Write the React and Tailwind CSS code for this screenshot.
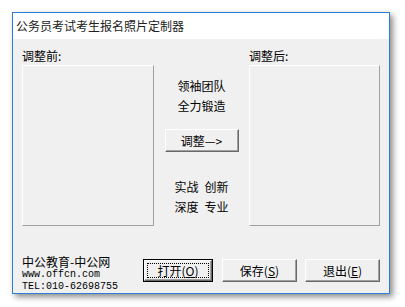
import React from 'react';

const cjk = { fontFamily: '"Noto Sans CJK SC", "Noto Sans", sans-serif' };
const mono = { fontFamily: '"Liberation Mono", "DejaVu Sans Mono", monospace' };

const WinButton = ({ children, width, focused }) => (
  <button
    type="button"
    className={
      focused
        ? 'h-[23px] border border-black bg-[#f0f0f0] p-0 flex'
        : 'h-[23px] border border-t-white border-l-white border-r-[#696969] border-b-[#696969] shadow-[inset_-1px_-1px_0_#a0a0a0] bg-[#f0f0f0] p-0 flex items-center justify-center text-[12px] text-black'
    }
    style={{ width }}
  >
    {focused ? (
      <span className="flex-1 flex border border-t-white border-l-white border-r-[#696969] border-b-[#696969] shadow-[inset_-1px_-1px_0_#a0a0a0] p-[2px]">
        <span className="flex-1 flex items-center justify-center border border-dotted border-black text-[12px] text-black leading-none">
          {children}
        </span>
      </span>
    ) : (
      children
    )}
  </button>
);

const PhotoPanel = () => (
  <div className="mt-[1px] h-[161px] border border-t-white border-l-white border-r-[#a0a0a0] border-b-[#a0a0a0] bg-[#f0f0f0]" />
);

export default function App() {
  return (
    <div className="w-[405px] h-[307px] bg-white pt-[12px] pl-[12px] text-black" style={cjk}>
      <div className="w-[378px] h-[282px] border border-[#2b7ed4] flex flex-col shadow-[3px_3px_6px_rgba(0,0,0,0.45)]">
        {/* title bar */}
        <div className="h-[26px] bg-white flex items-center pl-[3px] text-[12px] text-[#222]">
          公务员考试考生报名照片定制器
        </div>

        {/* body */}
        <div className="flex-1 bg-[#f0f0f0] px-[9px] flex flex-col">
          <div className="flex pt-[9px]">
            <div className="w-[132px]">
              <div className="h-[16px] leading-[16px] text-[12px]">调整前:</div>
              <PhotoPanel />
            </div>

            <div className="flex-1 flex flex-col items-center pt-[28px] text-[12px]">
              <div className="leading-[20px]">领袖团队</div>
              <div className="leading-[20px]">全力锻造</div>
              <div className="mt-[13px]">
                <WinButton width="74px">调整—&gt;</WinButton>
              </div>
              <div className="mt-[25px] leading-[20px]">
                实战<span className="ml-[6px]">创新</span>
              </div>
              <div className="leading-[20px]">
                深度<span className="ml-[6px]">专业</span>
              </div>
            </div>

            <div className="w-[131px]">
              <div className="h-[16px] leading-[16px] text-[12px]">调整后:</div>
              <PhotoPanel />
            </div>
          </div>

          {/* bottom row */}
          <div className="mt-[29px] flex">
            <div className="w-[122px] flex flex-col">
              <div className="h-[14px] leading-[14px] text-[12px]">中公教育-中公网</div>
              <div className="h-[12px] leading-[12px] text-[10px]" style={mono}>www.offcn.com</div>
              <div className="h-[12px] leading-[12px] text-[10px]" style={mono}>TEL:010-62698755</div>
            </div>
            <div className="flex mt-[4px]">
              <WinButton width="70px" focused>
                打开(<u>O</u>)
              </WinButton>
              <div className="ml-[9px]">
                <WinButton width="75px">
                  保存(<u>S</u>)
                </WinButton>
              </div>
              <div className="ml-[8px]">
                <WinButton width="75px">
                  退出(<u>E</u>)
                </WinButton>
              </div>
            </div>
          </div>
        </div>
      </div>
    </div>
  );
}
